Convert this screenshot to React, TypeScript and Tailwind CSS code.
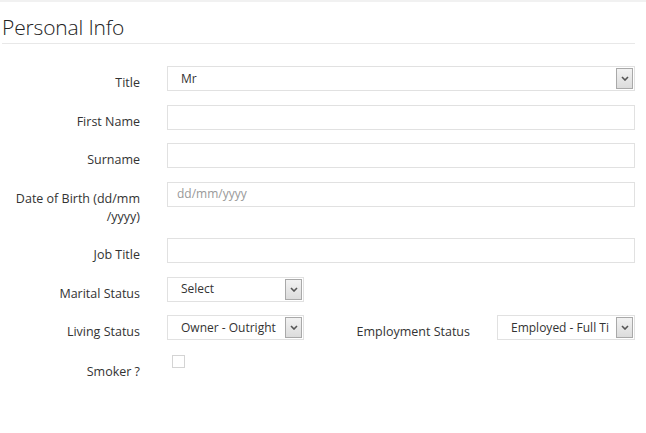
import React from "react";

const font = { fontFamily: '"Open Sans", "Liberation Sans", sans-serif' };

function Arrow() {
  return (
    <span className="absolute right-px top-px bottom-px flex w-[17px] items-center justify-center border border-[#a9a9a9] bg-gradient-to-b from-[#f2f2f2] to-[#dcdcdc]">
      <svg width="8" height="5" viewBox="0 0 8 5" fill="none">
        <path d="M1 1 L4 4 L7 1" stroke="#555" strokeWidth="1.6" />
      </svg>
    </span>
  );
}

function Select({ value, className }: { value: string; className: string }) {
  return (
    <div
      className={`relative h-[25px] overflow-hidden border border-[#e1e1e1] bg-white ${className}`}
    >
      <div className="ml-[13px] mr-[25px] flex h-full items-center overflow-hidden whitespace-nowrap text-[12px] text-[#333]">
        {value}
      </div>
      <Arrow />
    </div>
  );
}

function TextInput({ placeholder }: { placeholder?: string }) {
  return (
    <div className="flex h-[25px] w-[468px] items-center border border-[#e1e1e1] bg-white pl-[9px] text-[12px] text-[#999]">
      {placeholder}
    </div>
  );
}

const labelCls = "-mb-px pt-[8px] text-right text-[12.5px] leading-[18px] text-[#333]";

function Row({ label, children }: { label: React.ReactNode; children: React.ReactNode }) {
  return (
    <div className="mb-[13.5px] flex items-start">
      <label className={`w-[140px] ${labelCls}`}>{label}</label>
      <div className="ml-[27px]">{children}</div>
    </div>
  );
}

export default function App() {
  return (
    <div className="h-[433px] w-[646px] overflow-hidden bg-white" style={font}>
      <div className="h-[2px] bg-[#f1f1f1]" />
      <div className="ml-[2px] w-[633px] border-b border-[#e8e8e8] pt-[11px] pb-[2px]">
        <h2 className="text-[21px] font-light leading-[28px] tracking-[-0.15px] text-[#222]">
          Personal Info
        </h2>
      </div>

      <div className="pt-[22px]">
        <Row label="Title">
          <Select value="Mr" className="w-[468px]" />
        </Row>
        <Row label="First Name">
          <TextInput />
        </Row>
        <Row label="Surname">
          <TextInput />
        </Row>
        <Row
          label={
            <>
              Date of Birth (dd/mm
              <br />
              /yyyy)
            </>
          }
        >
          <TextInput placeholder="dd/mm/yyyy" />
        </Row>
        <Row label="Job Title">
          <TextInput />
        </Row>
        <Row label="Marital Status">
          <Select value="Select" className="w-[137px]" />
        </Row>
        <div className="mb-[14.5px] flex items-start">
          <label className={`w-[140px] ${labelCls}`}>Living Status</label>
          <div className="ml-[27px]">
            <Select value="Owner - Outright" className="w-[137px]" />
          </div>
          <label className={`w-[166px] ${labelCls}`}>Employment Status</label>
          <div className="ml-[27px]">
            <Select value="Employed - Full Time" className="w-[138px]" />
          </div>
        </div>
        <div className="flex items-start">
          <label className={`w-[140px] ${labelCls}`}>Smoker ?</label>
          <div className="ml-[32px]">
            <span className="block h-[13px] w-[13px] border border-[#d4d4d4] bg-white" />
          </div>
        </div>
      </div>
    </div>
  );
}
